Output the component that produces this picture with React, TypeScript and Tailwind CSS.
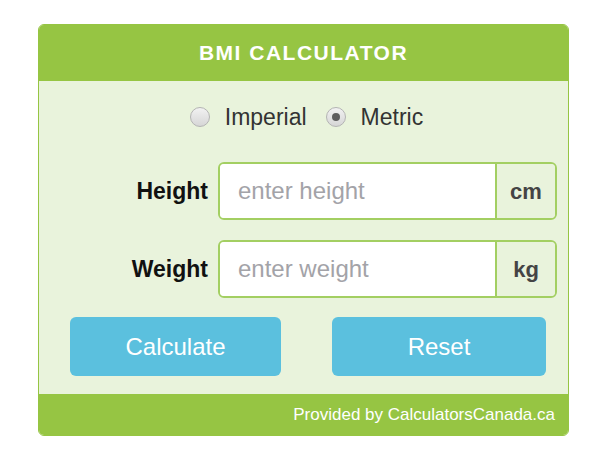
import { useState } from 'react';

function Radio({ checked, label, onClick }: { checked: boolean; label: string; onClick: () => void }) {
  return (
    <label onClick={onClick} className="flex items-center cursor-pointer">
      <span className="flex h-[20px] w-[20px] items-center justify-center rounded-full border border-[#b4b4b4] bg-gradient-to-b from-[#f2f2f2] to-[#d6d6d6]">
        {checked && <span className="h-[8px] w-[8px] rounded-full bg-[#5e5e5e]" />}
      </span>
      <span className="ml-[15px] text-[23px] text-[#333]">{label}</span>
    </label>
  );
}

function Field({ label, placeholder, unit }: { label: string; placeholder: string; unit: string }) {
  return (
    <div className="flex items-center">
      <div className="w-[169px] text-right text-[23px] font-bold text-[#111]">{label}</div>
      <div className="ml-[10px] mr-[11px] flex h-[58px] flex-1 overflow-hidden rounded-[6px] border-2 border-[#a3cf62]">
        <input
          placeholder={placeholder}
          className="min-w-0 flex-1 bg-white px-[18px] text-[24px] text-[#333] outline-none placeholder:text-[#a3a3a8]"
        />
        <div className="flex w-[60px] items-center justify-center border-l-2 border-[#a3cf62] bg-[#e9f3dc] text-[22px] font-bold text-[#444]">
          {unit}
        </div>
      </div>
    </div>
  );
}

export default function App() {
  const [metric, setMetric] = useState(true);

  return (
    <div className="min-h-[475px] bg-white pl-[38px] pt-[24px] font-['Liberation_Sans',Arial,sans-serif]">
      <div className="w-[531px] overflow-hidden rounded-[6px] border border-[#96c543] bg-[#e9f3dc]">
        <div className="flex h-[56px] items-center justify-center bg-[#96c543] text-[21px] font-bold tracking-[1.5px] text-white">
          BMI CALCULATOR
        </div>

        <div className="flex h-[26px] items-center justify-center gap-[19px] mt-[23px] pl-[6px]">
          <Radio checked={!metric} label="Imperial" onClick={() => setMetric(false)} />
          <Radio checked={metric} label="Metric" onClick={() => setMetric(true)} />
        </div>

        <div className="mt-[32px] flex flex-col gap-[20px]">
          <Field label="Height" placeholder="enter height" unit={metric ? 'cm' : 'in'} />
          <Field label="Weight" placeholder="enter weight" unit={metric ? 'kg' : 'lb'} />
        </div>

        <div className="mt-[19px] mb-[18px] flex justify-between pl-[31px] pr-[22px]">
          <button className="h-[59px] w-[211px] rounded-[6px] bg-[#5bc0de] text-[24px] text-white">Calculate</button>
          <button className="h-[59px] w-[214px] rounded-[6px] bg-[#5bc0de] text-[24px] text-white">Reset</button>
        </div>

        <div className="flex h-[41px] items-center justify-end bg-[#96c543] pr-[13px] text-[17px] text-white">
          Provided by CalculatorsCanada.ca
        </div>
      </div>
    </div>
  );
}
